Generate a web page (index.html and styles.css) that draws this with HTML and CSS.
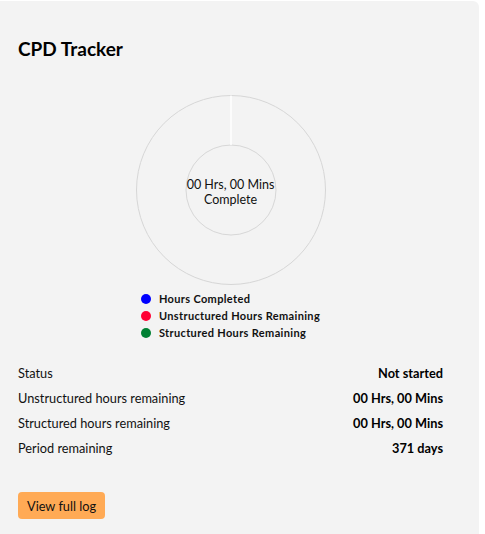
FILE: index.html
```html
<!DOCTYPE html>
<html>
<head>
<meta charset="utf-8">
<link rel="stylesheet" href="styles.css">
</head>
<body>
<div class="card">
  <h2 class="title">CPD Tracker</h2>
  <div class="chart">
    <div class="donut">
      <svg width="192" height="192" viewBox="0 0 192 192">
        <circle cx="96" cy="96" r="94.5" fill="none" stroke="#d6d6d6" stroke-width="1"/>
        <circle cx="96" cy="96" r="45" fill="none" stroke="#d6d6d6" stroke-width="1"/>
        <line x1="96" y1="1.5" x2="96" y2="51" stroke="#ffffff" stroke-width="1.5"/>
      </svg>
      <div class="donut-label">00 Hrs, 00 Mins<br>Complete</div>
    </div>
    <ul class="legend">
      <li><span class="dot blue"></span>Hours Completed</li>
      <li><span class="dot red"></span>Unstructured Hours Remaining</li>
      <li><span class="dot green"></span>Structured Hours Remaining</li>
    </ul>
  </div>
  <div class="stats">
    <div class="row"><span>Status</span><b>Not started</b></div>
    <div class="row"><span>Unstructured hours remaining</span><b>00 Hrs, 00 Mins</b></div>
    <div class="row"><span>Structured hours remaining</span><b>00 Hrs, 00 Mins</b></div>
    <div class="row"><span>Period remaining</span><b>371 days</b></div>
  </div>
  <button class="btn">View full log</button>
</div>
</body>
</html>
```

FILE: styles.css
```css
html, body {
  margin: 0;
  padding: 0;
  background: #ffffff;
}
body {
  font-family: Lato, "Liberation Sans", sans-serif;
  color: #111;
}
.card {
  width: 479px;
  box-sizing: border-box;
  margin-top: 1px;
  height: 533px;
  overflow: hidden;
  background: #f3f3f3;
  border-radius: 0 6px 0 0;
  padding: 36px 36px 0 18px;
}
.title {
  margin: 0;
  font-size: 19px;
  font-weight: 700;
  line-height: 23px;
  color: #000;
}
.chart {
  display: flex;
  flex-direction: column;
  align-items: center;
  margin-top: 34px;
}
.donut {
  position: relative;
  width: 192px;
  height: 192px;
}
.donut svg {
  display: block;
}
.donut-label {
  position: absolute;
  left: 0;
  right: 0;
  top: 83px;
  text-align: center;
  font-size: 12.5px;
  line-height: 15px;
  color: #111;
}
.legend {
  list-style: none;
  margin: 4px 0 0 0;
  padding: 0;
}
.legend li {
  display: flex;
  align-items: center;
  height: 17px;
  font-size: 11px;
  font-weight: 700;
  letter-spacing: 0.35px;
  color: #111;
}
.dot {
  width: 10px;
  height: 10px;
  border-radius: 50%;
  margin-right: 8px;
}
.blue { background: #0000ff; }
.red { background: #ff0033; }
.green { background: #008033; }
.stats {
  margin-top: 20px;
}
.row {
  display: flex;
  justify-content: space-between;
  height: 25px;
  line-height: 25px;
  font-size: 12.75px;
  color: #111;
}
.row b {
  font-weight: 700;
  color: #000;
}
.btn {
  display: block;
  margin-top: 31px;
  border: none;
  background: #ffaa55;
  border-radius: 4px;
  height: 27px;
  padding: 0 9px;
  font-family: Lato, "Liberation Sans", sans-serif;
  font-size: 12.75px;
  color: #111;
}
```
